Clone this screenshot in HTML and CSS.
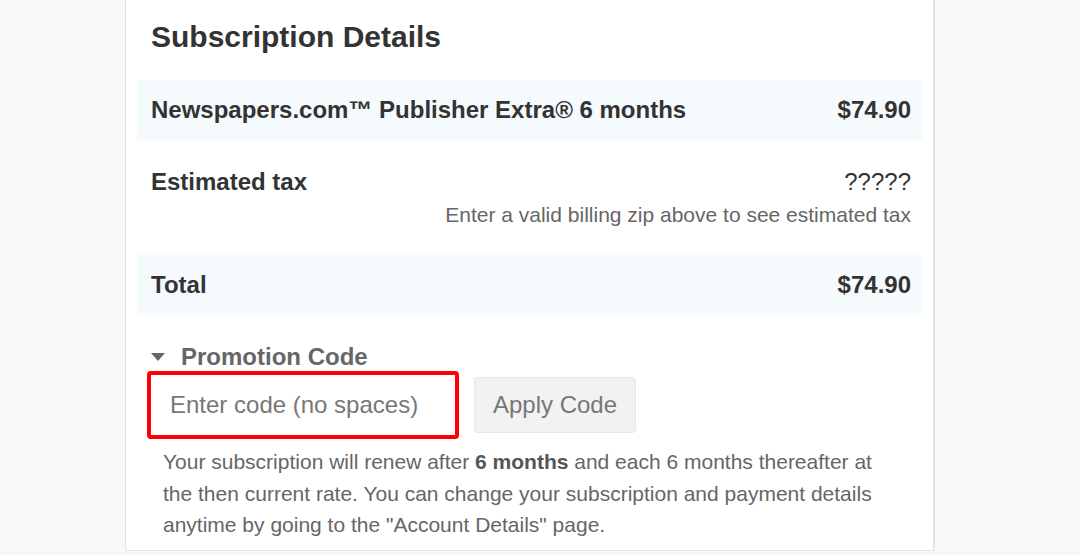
FILE: index.html
```html
<!DOCTYPE html>
<html lang="en">
<head>
    <title>Subscription Details</title>
    <link rel="stylesheet" href="styles.css">
</head>
<body>
    <div class="card">
        <h2>Subscription Details</h2>

        <div class="row shaded">
            <span class="label">Newspapers.com™ Publisher Extra® 6 months</span>
            <span class="price">$74.90</span>
        </div>

        <div class="row tax-row">
            <div class="tax-top">
                <span class="label">Estimated tax</span>
                <span class="unknown">?????</span>
            </div>
            <div class="tax-note">Enter a valid billing zip above to see estimated tax</div>
        </div>

        <div class="row shaded">
            <span class="label">Total</span>
            <span class="price">$74.90</span>
        </div>

        <div class="promo">
            <div class="promo-title"><span class="caret"></span>Promotion Code</div>
            <div class="promo-form">
                <input type="text" class="code-input" placeholder="Enter code (no spaces)">
                <button class="apply-btn">Apply Code</button>
            </div>
            <p class="renew-note">Your subscription will renew after <b>6 months</b> and each 6 months thereafter at the then current rate. You can change your subscription and payment details anytime by going to the "Account Details" page.</p>
        </div>
    </div>
</body>
</html>
```

FILE: styles.css
```css
body {
    margin: 0;
    background-color: #f8f8f8;
    font-family: "Liberation Sans", Arial, sans-serif;
    color: #333;
}

.card {
    margin-left: 125px;
    width: 785px;
    background: white;
    border: 1px solid #e4e4e4;
    border-top: none;
    border-right-width: 2px;
    padding: 0 11px 9px 11px;
}

h2 {
    margin: 0;
    padding: 20px 14px 0 14px;
    height: 60px;
    font-size: 30px;
    font-weight: bold;
    color: #333;
}

.row {
    display: flex;
    justify-content: space-between;
    align-items: center;
    padding: 0 11px 0 14px;
    font-size: 24px;
}

.shaded {
    background-color: #f5fafd;
    height: 60px;
}

.label, .price {
    font-weight: bold;
}

.tax-row {
    flex-direction: column;
    align-items: stretch;
    height: 115px;
    justify-content: flex-start;
    padding-top: 28px;
    box-sizing: border-box;
}

.tax-top {
    display: flex;
    justify-content: space-between;
}

.tax-note {
    text-align: right;
    font-size: 21px;
    color: #666;
    margin-top: 7px;
}

.promo {
    padding: 28px 14px 0 14px;
}

.promo-title {
    font-size: 24px;
    font-weight: bold;
    color: #666;
    display: flex;
    align-items: center;
}

.caret {
    width: 0;
    height: 0;
    border-left: 7px solid transparent;
    border-right: 7px solid transparent;
    border-top: 8px solid #666;
    margin-right: 16px;
}

.promo-form {
    display: flex;
    align-items: center;
    margin-left: -4px;
}

.code-input {
    width: 312px;
    height: 68px;
    box-sizing: border-box;
    border: 4px solid #ff0000;
    border-radius: 4px;
    padding: 0 19px;
    font-family: "Liberation Sans", Arial, sans-serif;
    font-size: 24px;
    color: #333;
}

.code-input::placeholder {
    color: #777;
}

.apply-btn {
    margin-left: 15px;
    width: 162px;
    height: 56px;
    background-color: #f2f2f2;
    border: 1px solid #e6e6e6;
    border-radius: 4px;
    font-family: "Liberation Sans", Arial, sans-serif;
    font-size: 24px;
    color: #777;
}

.renew-note {
    margin: 7px 0 0 12px;
    font-size: 21px;
    line-height: 31.5px;
    color: #666;
    width: 725px;
}

.renew-note b {
    color: #555;
}
```
